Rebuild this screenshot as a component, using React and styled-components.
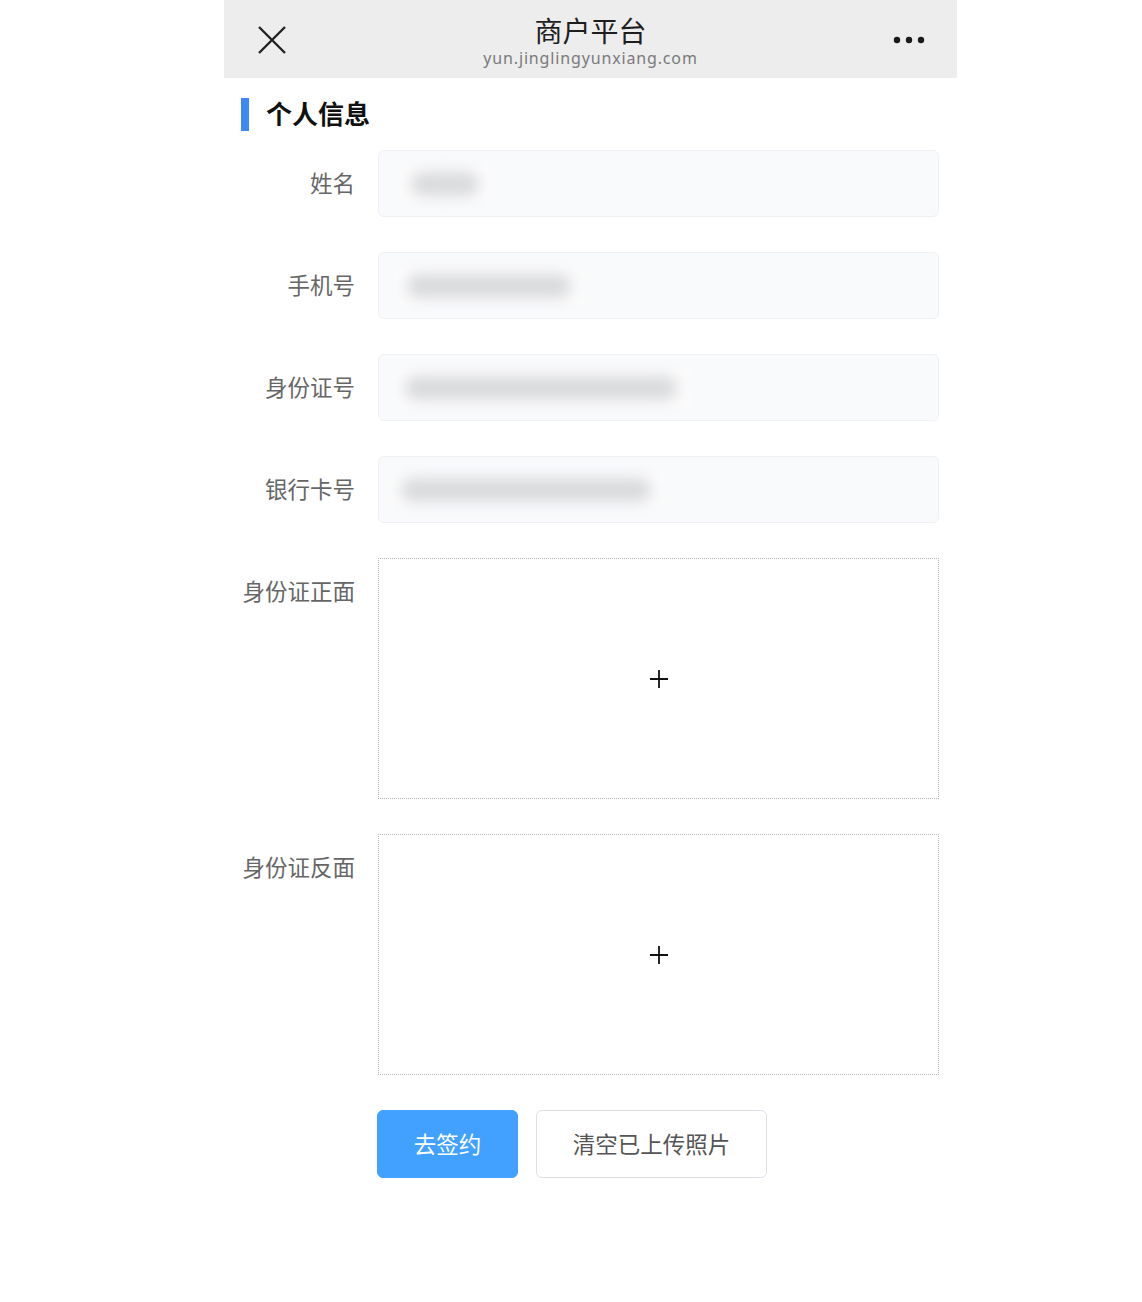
import styled, { createGlobalStyle } from 'styled-components'

const Global = createGlobalStyle`
    body {
        margin: 0;
        background: #fff;
        font-family: "Noto Sans CJK SC", "Noto Sans", sans-serif;
    }
`

const Page = styled.div`
    width: 733px;
    margin-left: 224px;
    padding-bottom: 124px;
`

const Header = styled.div`
    height: 78px;
    background: #ededed;
    display: grid;
    grid-template-columns: 96px 1fr 96px;
    align-items: center;
`

const IconBtn = styled.div`
    display: flex;
    align-items: center;
    justify-content: ${({right}) => (right ? 'flex-end' : 'flex-start')};
    padding: ${({right}) => (right ? '2px 32px 0 0' : '2px 0 0 34px')};
`

const TitleBox = styled.div`
    display: flex;
    flex-direction: column;
    align-items: center;
    padding-top: 4px;
`

const Title = styled.div`
    font-size: 28px;
    line-height: 34px;
    color: #1e1e1e;
`

const Sub = styled.div`
    font-family: "Noto Sans", "Open Sans", sans-serif;
    font-size: 16px;
    line-height: 22px;
    color: #7a7a7a;
    letter-spacing: 0.85px;
`

const Section = styled.div`
    display: flex;
    align-items: center;
    gap: 17px;
    margin: 20px 0 19px 17px;
    height: 33px;
`

const Bar = styled.div`
    width: 8px;
    height: 33px;
    background: #3d8af7;
`

const SectionTitle = styled.div`
    font-size: 26px;
    line-height: 30px;
    font-weight: 700;
    color: #111;
    margin-top: -3px;
`

const Form = styled.div`
    display: grid;
    grid-template-columns: 114px 1fr;
    column-gap: 23px;
    row-gap: 35px;
    padding: 0 18px 0 17px;
`

const Label = styled.div`
    height: 67px;
    box-sizing: border-box;
    padding-bottom: 3px;
    display: flex;
    align-items: center;
    justify-content: flex-end;
    font-size: 22.5px;
    color: #666;
    white-space: nowrap;
`

const Input = styled.div`
    height: 67px;
    box-sizing: border-box;
    border: 1px solid #eef0f3;
    border-radius: 6px;
    background: #f9fafc;
    display: flex;
    align-items: center;
    padding-left: ${({pad}) => pad}px;
`

const Mask = styled.div`
    height: ${({h}) => h}px;
    background: #fbfbfc;
    display: flex;
    align-items: center;
    padding: 0 12px;
    box-sizing: border-box;
`

const Blur = styled.div`
    height: 24px;
    border-radius: 12px;
    background: #d9dadc;
    filter: blur(7px);
`

const Upload = styled.div`
    height: 241px;
    box-sizing: border-box;
    border: 1px dotted #b8b8b8;
    display: flex;
    align-items: center;
    justify-content: center;
`

const Buttons = styled.div`
    grid-column: 2;
    display: flex;
    gap: 18px;
    margin-left: -1px;
`

const Button = styled.button`
    height: 68px;
    width: ${({w}) => w}px;
    box-sizing: border-box;
    border-radius: 6px;
    font-family: "Noto Sans CJK SC", sans-serif;
    font-size: 22.5px;
    border: 1px solid ${({primary}) => (primary ? '#42a0ff' : '#dcdfe6')};
    background: ${({primary}) => (primary ? '#42a0ff' : '#fff')};
    color: ${({primary}) => (primary ? '#fff' : '#555')};
    padding: 0 0 2px;
`

const fields = [
    { label: '姓名', pad: 20, mw: 92, h: 35, bw: 70 },
    { label: '手机号', pad: 16, mw: 190, h: 37, bw: 164 },
    { label: '身份证号', pad: 14, mw: 298, h: 36, bw: 272 },
    { label: '银行卡号', pad: 10, mw: 276, h: 32, bw: 250 },
]

const Plus = () => (
    <svg width="20" height="20" viewBox="0 0 20 20">
        <path d="M10 1v18M1 10h18" stroke="#111" strokeWidth="1.8" fill="none" />
    </svg>
)

const App = () => {
    return (
        <Page>
            <Global />
            <Header>
                <IconBtn>
                    <svg width="28" height="28" viewBox="0 0 28 28">
                        <path d="M1 1l26 26M27 1L1 27" stroke="#222" strokeWidth="2.4" fill="none" />
                    </svg>
                </IconBtn>
                <TitleBox>
                    <Title>商户平台</Title>
                    <Sub>yun.jinglingyunxiang.com</Sub>
                </TitleBox>
                <IconBtn right>
                    <svg width="32" height="8" viewBox="0 0 32 8">
                        <circle cx="4" cy="4" r="3.2" fill="#1a1a1a" />
                        <circle cx="16" cy="4" r="3.2" fill="#1a1a1a" />
                        <circle cx="28" cy="4" r="3.2" fill="#1a1a1a" />
                    </svg>
                </IconBtn>
            </Header>

            <Section>
                <Bar />
                <SectionTitle>个人信息</SectionTitle>
            </Section>

            <Form>
                {
                    fields.map(({label, pad, mw, h, bw}) => (
                        <>
                            <Label key={label + 'l'}>{label}</Label>
                            <Input key={label} pad={pad}>
                                <Mask h={h} style={{ width: mw }}>
                                    <Blur style={{ width: bw }} />
                                </Mask>
                            </Input>
                        </>
                    ))
                }
                <Label>身份证正面</Label>
                <Upload><Plus /></Upload>
                <Label>身份证反面</Label>
                <Upload><Plus /></Upload>
                <Buttons>
                    <Button primary w={141}>去签约</Button>
                    <Button w={231}>清空已上传照片</Button>
                </Buttons>
            </Form>
        </Page>
    )
}

export default App
